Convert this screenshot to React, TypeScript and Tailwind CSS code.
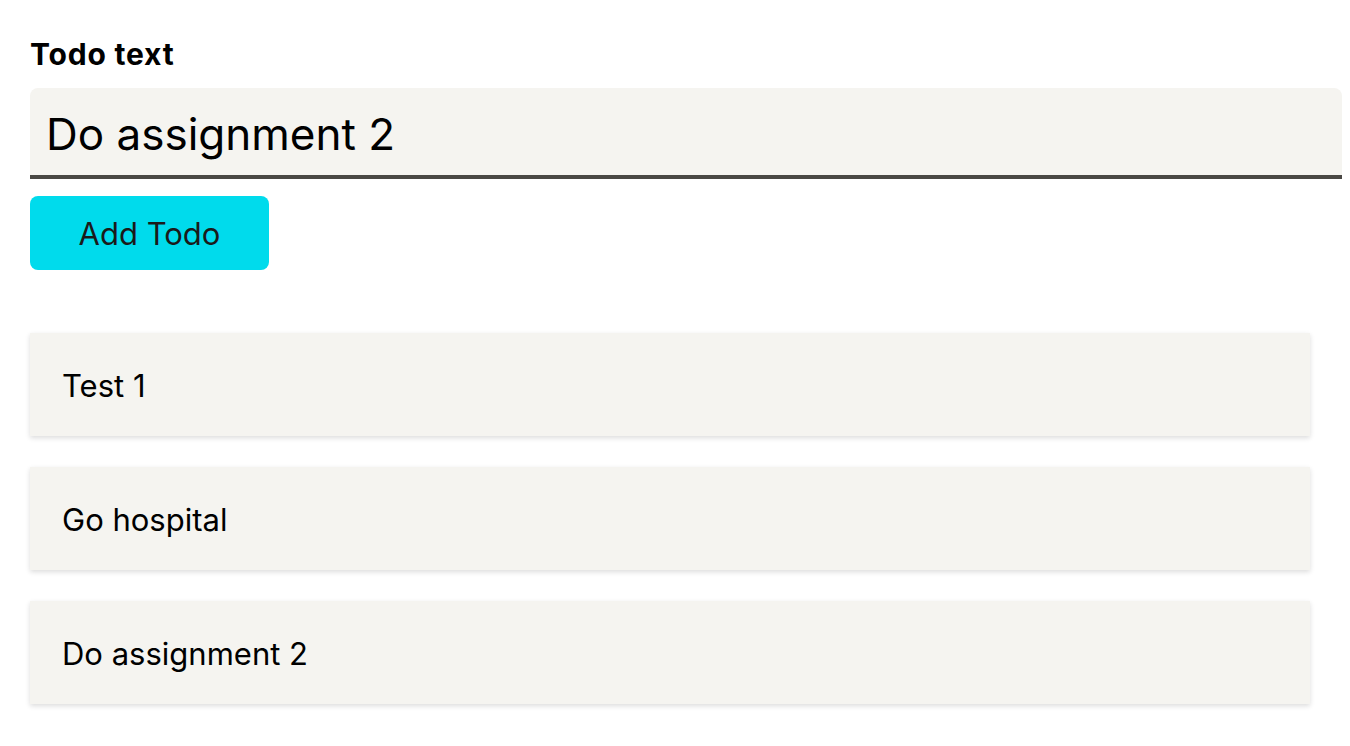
import React, { useState } from 'react';

const App = () => {
  const [text, setText] = useState('Do assignment 2');
  const [todos, setTodos] = useState<string[]>(['Test 1', 'Go hospital', 'Do assignment 2']);

  // Add the current input as a new todo
  const handleAdd = () => {
    if (!text.trim()) return;
    setTodos([...todos, text]);
  };

  return (
    <div className="min-h-screen bg-white pt-[36px] pl-[30px] font-['Inter','Liberation_Sans',sans-serif] text-black">
      <label className="block text-[30px] font-bold leading-[36px] tracking-[0.8px]">Todo text</label>
      <input
        value={text}
        onChange={(e) => setText(e.target.value)}
        className="mt-[16px] block h-[91px] w-[1312px] rounded-t-[8px] border-b-[4px] border-[#4a4844] bg-[#f5f4f0] px-[16px] pt-[4px] text-[44px] outline-none"
      />
      <button
        onClick={handleAdd}
        className="mt-[17px] block h-[74px] w-[239px] rounded-[8px] bg-[#00dbec] pt-[3px] text-[31px] text-[#1a1a1a]"
      >
        Add Todo
      </button>
      <div className="mt-[63px] flex w-[1280px] flex-col gap-[31px]">
        {todos.map((todo, i) => (
          <div
            key={i}
            className="flex h-[103px] items-center bg-[#f5f4f0] px-[32px] pt-[4px] text-[31px] shadow-[0_2px_5px_rgba(0,0,0,0.14)]"
          >
            {todo}
          </div>
        ))}
      </div>
    </div>
  );
};

export default App;
